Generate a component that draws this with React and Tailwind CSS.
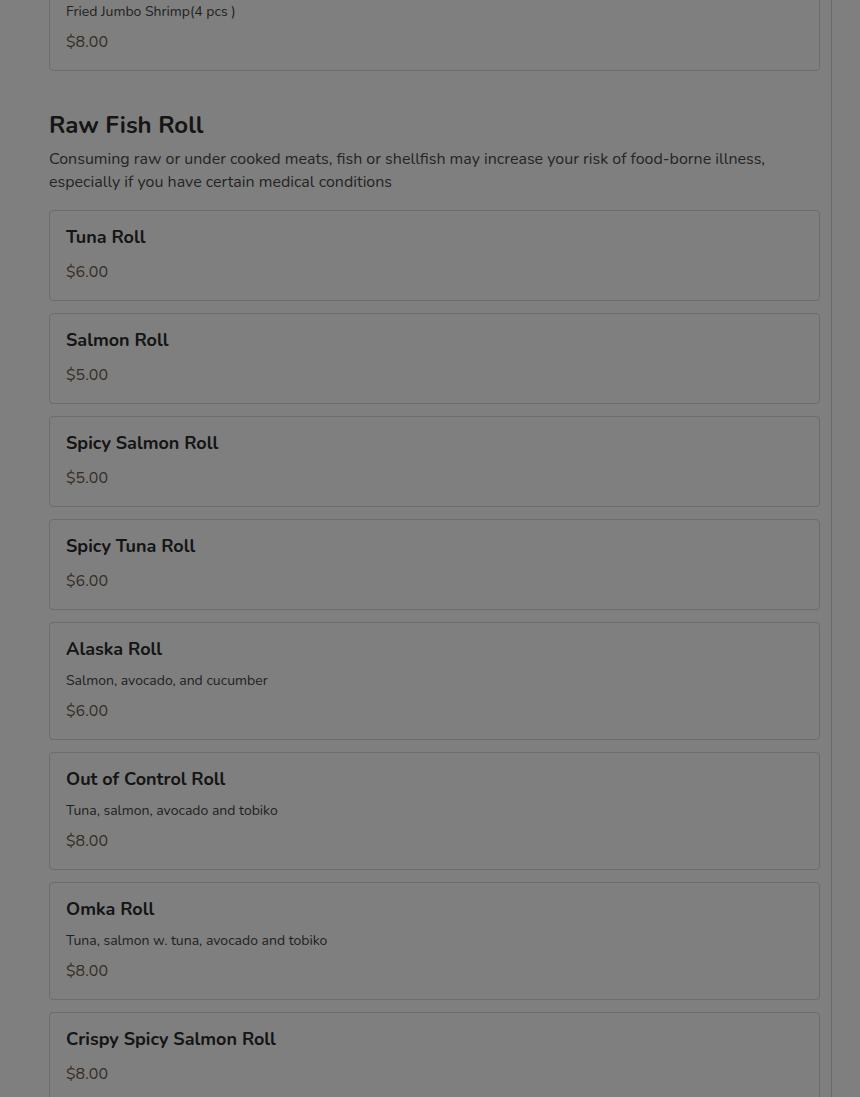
import React from "react";

const items = [
  { name: "Tuna Roll", price: "$6.00" },
  { name: "Salmon Roll", price: "$5.00" },
  { name: "Spicy Salmon Roll", price: "$5.00" },
  { name: "Spicy Tuna Roll", price: "$6.00" },
  { name: "Alaska Roll", desc: "Salmon, avocado, and cucumber", price: "$6.00" },
  { name: "Out of Control Roll", desc: "Tuna, salmon, avocado and tobiko", price: "$8.00" },
  { name: "Omka Roll", desc: "Tuna, salmon w. tuna, avocado and tobiko", price: "$8.00" },
  { name: "Crispy Spicy Salmon Roll", price: "$8.00" },
];

function Card({ name, desc, price }) {
  return (
    <div className="border border-[#d9d9d9] rounded-[4px] bg-white px-4 pt-[15px] pb-4 flex flex-col">
      <div className="h-[22px] text-[18px] leading-[22px] font-bold text-[#2a2a2a]">{name}</div>
      {desc && (
        <div className="mt-[11px] text-[14px] leading-[20px] text-[#444]">{desc}</div>
      )}
      <div className={`${desc ? "mt-[8px]" : "mt-[12px]"} text-[16px] leading-[24px] text-[#6e5b48]`}>{price}</div>
    </div>
  );
}

export default function App() {
  return (
    <div
      className="relative w-[860px] h-[1097px] overflow-hidden bg-white"
      style={{ fontFamily: "Nunito, Lato, 'Open Sans', sans-serif" }}
    >
      <div className="flex h-full">
        <div className="w-[832px] h-full border-r border-[#d6d6d6] pl-[49px] pr-[11px]">
          <div className="-mt-[47px]">
            <Card name="" desc="Fried Jumbo Shrimp(4 pcs )" price="$8.00" />
          </div>
          <h2 className="mt-[38px] text-[24px] leading-[32px] font-bold text-[#2a2a2a]">Raw Fish Roll</h2>
          <p className="mt-[7px] text-[16px] leading-[23px] text-[#4a4a4a]">
            Consuming raw or under cooked meats, fish or shellfish may increase your risk of food-borne illness, especially if you have certain medical conditions
          </p>
          <div className="mt-[16px] flex flex-col gap-[12px]">
            {items.map((it) => (
              <Card key={it.name} {...it} />
            ))}
          </div>
        </div>
      </div>
      <div className="absolute inset-0 bg-black/50" />
    </div>
  );
}
